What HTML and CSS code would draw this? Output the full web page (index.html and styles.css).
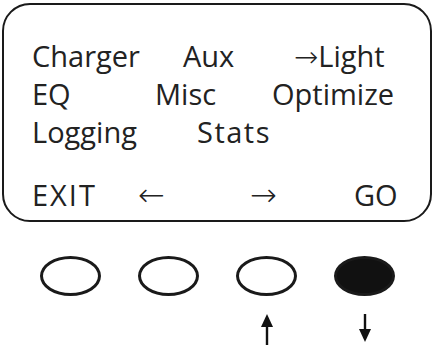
FILE: index.html
```html
<!DOCTYPE html>
<html>
<head>
<meta charset="utf-8">
<link rel="stylesheet" href="styles.css">
</head>
<body>
<div class="screen">
  <div class="row row-a"><span>Charger</span><span>Aux</span><span><span class="glyph-arrow tight">→</span>Light</span></div>
  <div class="row row-b"><span>EQ</span><span>Misc</span><span>Optimize</span></div>
  <div class="row row-c"><span>Logging</span><span class="wide">Stats</span></div>
  <div class="row row-d"><span class="wider">EXIT</span><span class="glyph-arrow big">←</span><span class="glyph-arrow big">→</span><span>GO</span></div>
</div>
<div class="buttons">
  <div class="btn"></div>
  <div class="btn"></div>
  <div class="btn"></div>
  <div class="btn btn-on"></div>
</div>
<div class="arrows">
  <div class="slot"></div>
  <div class="slot"></div>
  <div class="slot">
    <svg class="arrow" width="16" height="31" viewBox="0 0 16 31">
      <polygon points="8,0 14,13 2,13" fill="#111"/>
      <rect x="6.8" y="11" width="2.4" height="20" fill="#111"/>
    </svg>
  </div>
  <div class="slot">
    <svg class="arrow" width="16" height="31" viewBox="0 0 16 31">
      <rect x="6.8" y="0" width="2.4" height="16" fill="#111"/>
      <polygon points="2,15 14,15 8,28" fill="#111"/>
    </svg>
  </div>
</div>
</body>
</html>
```
FILE: styles.css
```css
html, body {
  margin: 0;
  padding: 0;
  background: #fff;
  overflow: hidden;
}
body {
  width: 434px;
  height: 346px;
  font-family: "Open Sans", "DejaVu Sans", sans-serif;
  color: #222;
}
.screen {
  box-sizing: border-box;
  margin: 3px 0 0 2px;
  width: 430px;
  height: 219px;
  border: 2px solid #1a1a1a;
  border-radius: 28px;
  padding: 32px 0 0 28px;
  font-size: 29px;
  font-weight: 380;
}
.row {
  display: grid;
  height: 38px;
  line-height: 38px;
  white-space: nowrap;
}
.row-a { grid-template-columns: 151px 112px auto; }
.row-b { grid-template-columns: 123px 117px auto; }
.row-c { grid-template-columns: 165px auto; }
.row-d { grid-template-columns: 106px 112px 104px auto; margin-top: 25px; }
.wide { letter-spacing: 1.5px; }
.wider { letter-spacing: 2px; }
.glyph-arrow {
  font-family: "DejaVu Sans", sans-serif;
  font-weight: 300;
}
.glyph-arrow.tight {
  margin-left: -1px;
}
.glyph-arrow.big {
  font-size: 32px;
}

.buttons, .arrows {
  display: grid;
  grid-template-columns: repeat(4, 61px);
  column-gap: 37px;
  padding-left: 40px;
}
.buttons { margin-top: 34px; }
.btn {
  box-sizing: border-box;
  width: 61px;
  height: 40px;
  border: 3px solid #1a1a1a;
  border-radius: 50%;
}
.btn-on { background: #111; }
.arrows { margin-top: 18px; }
.slot {
  display: flex;
  justify-content: center;
}
.arrow { display: block; }
```
